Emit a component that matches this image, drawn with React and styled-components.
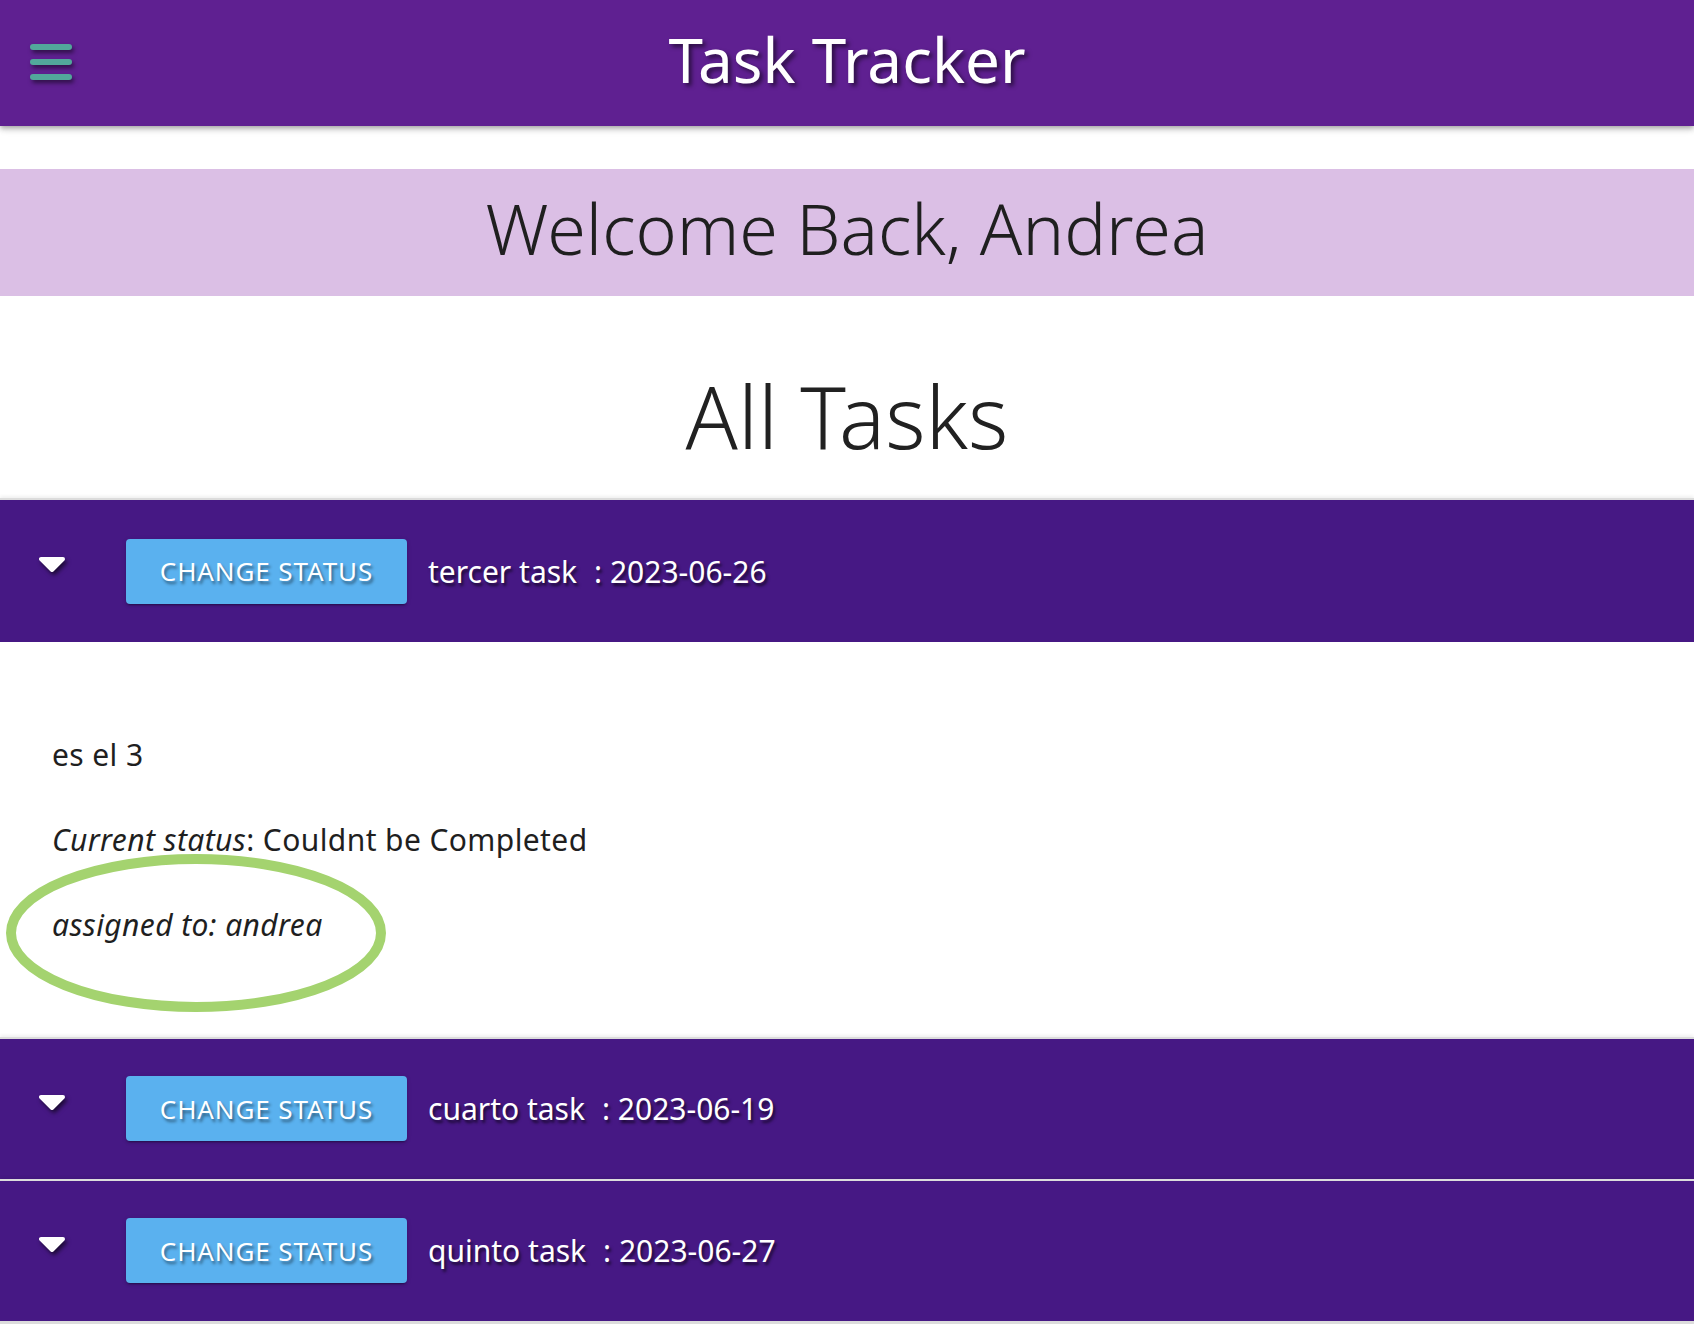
import { useState } from 'react';
import styled, { createGlobalStyle } from 'styled-components';

const initialTasks = [
  {
    id: 3,
    title: 'tercer task',
    date: '2023-06-26',
    description: 'es el 3',
    status: 'Couldnt be Completed',
    assignee: 'andrea',
  },
  {
    id: 4,
    title: 'cuarto task',
    date: '2023-06-19',
    description: 'es el 4',
    status: 'In Progress',
    assignee: 'andrea',
  },
  {
    id: 5,
    title: 'quinto task',
    date: '2023-06-27',
    description: 'es el 5',
    status: 'Pending',
    assignee: 'andrea',
  },
];

function MenuIcon() {
  return (
    <svg width="42" height="42" viewBox="0 0 42 42">
      <g stroke="#52a79b" strokeWidth="6" strokeLinecap="round">
        <line x1="3" y1="5" x2="39" y2="5" />
        <line x1="3" y1="20" x2="39" y2="20" />
        <line x1="3" y1="35" x2="39" y2="35" />
      </g>
    </svg>
  );
}

function ExpandIcon() {
  return (
    <svg width="28" height="16" viewBox="0 0 28 16">
      <polygon
        points="3,3 25,3 14,14"
        fill="#fff"
        stroke="#fff"
        strokeWidth="4"
        strokeLinejoin="round"
      />
    </svg>
  );
}

export default function App() {
  const [openId, setOpenId] = useState(3);

  return (
    <>
      <GlobalStyle />
      <Header>
        <MenuButton aria-label="menu">
          <MenuIcon />
        </MenuButton>
        <Title>Task Tracker</Title>
        <span />
      </Header>
      <Welcome>
        <WelcomeText>Welcome Back, Andrea</WelcomeText>
      </Welcome>
      <Heading>All Tasks</Heading>
      <TaskList>
        {initialTasks.map((task) => {
          const open = openId === task.id;
          return (
            <Item key={task.id}>
              <Summary $open={open}>
                <Toggle onClick={() => setOpenId(open ? null : task.id)}>
                  <ExpandIcon />
                </Toggle>
                <StatusButton>Change Status</StatusButton>
                <RowText>
                  {task.title}
                  <DateLabel>: {task.date}</DateLabel>
                </RowText>
              </Summary>
              {open ? (
                <Details>
                  <Line>{task.description}</Line>
                  <Line>
                    <em>Current status</em>: {task.status}
                  </Line>
                  <Line>
                    <em>assigned to: {task.assignee}</em>
                  </Line>
                  <Highlight width="382" height="160" viewBox="0 0 382 160">
                    <ellipse
                      cx="191"
                      cy="80"
                      rx="185"
                      ry="74"
                      fill="none"
                      stroke="#a4d36f"
                      strokeWidth="10"
                    />
                  </Highlight>
                </Details>
              ) : null}
            </Item>
          );
        })}
      </TaskList>
    </>
  );
}

const GlobalStyle = createGlobalStyle`
  body {
    margin: 0;
    background: #fff;
    font-family: 'Noto Sans', 'DejaVu Sans', sans-serif;
    color: rgba(0, 0, 0, 0.87);
  }
`;

const Header = styled.header`
  position: relative;
  z-index: 1;
  display: grid;
  grid-template-columns: 1fr auto 1fr;
  align-items: center;
  height: 126px;
  background: #5f2091;
  box-shadow: 0 2px 4px -1px rgba(0, 0, 0, 0.2), 0 4px 5px 0 rgba(0, 0, 0, 0.14),
    0 1px 10px 0 rgba(0, 0, 0, 0.12);
`;

const MenuButton = styled.button`
  justify-self: start;
  display: flex;
  margin: 0 0 0 30px;
  padding: 0;
  border: none;
  background: none;
  cursor: pointer;
  filter: drop-shadow(2px 3px 2px rgba(0, 0, 0, 0.5));
`;

const Title = styled.h1`
  margin: 0;
  padding-bottom: 8px;
  font-size: 62px;
  font-weight: 400;
  line-height: 1.362;
  color: #fff;
  text-shadow: 3px 3px 4px rgba(0, 0, 0, 0.55);
`;

const Welcome = styled.div`
  display: flex;
  justify-content: center;
  align-items: center;
  height: 127px;
  margin-top: 43px;
  background: #dbbfe5;
`;

const WelcomeText = styled.h2`
  margin: 0;
  padding-bottom: 8px;
  font-size: 70px;
  font-weight: 300;
  line-height: 1.362;
  color: #1f1f1f;
`;

const Heading = styled.h2`
  margin: 71px 0 34px;
  font-size: 86px;
  font-weight: 300;
  line-height: 97px;
  text-align: center;
  color: #212121;
`;

const TaskList = styled.div`
  border-bottom: 3px solid #dcdcdc;
`;

const Item = styled.section`
  border-top: 2px solid #dcdcdc;
  box-shadow: 0 -2px 3px rgba(0, 0, 0, 0.06);
`;

const Summary = styled.div`
  display: flex;
  align-items: center;
  box-sizing: border-box;
  height: ${(p) => (p.$open ? 142 : 140)}px;
  padding-left: 38px;
  background: #461884;
`;

const Toggle = styled.button`
  display: flex;
  margin: 0 0 14px;
  padding: 0;
  border: none;
  background: none;
  cursor: pointer;
  filter: drop-shadow(2px 3px 2px rgba(0, 0, 0, 0.6));
`;

const StatusButton = styled.button`
  width: 281px;
  height: 65px;
  margin-left: 60px;
  padding: 0;
  border: none;
  border-radius: 4px;
  background: #5ab1ef;
  color: #fff;
  font-family: inherit;
  font-size: 26px;
  font-weight: 400;
  letter-spacing: 0.9px;
  text-transform: uppercase;
  text-shadow: 2px 3px 3px rgba(0, 0, 0, 0.45);
  box-shadow: 0 3px 1px -2px rgba(0, 0, 0, 0.2), 0 2px 2px 0 rgba(0, 0, 0, 0.14),
    0 1px 5px 0 rgba(0, 0, 0, 0.12);
  cursor: pointer;
`;

const RowText = styled.span`
  margin-left: 21px;
  font-size: 30px;
  color: #fff;
  text-shadow: 2px 3px 3px rgba(0, 0, 0, 0.6);
`;

const DateLabel = styled.span`
  margin-left: 17px;
`;

const Details = styled.div`
  position: relative;
  padding: 91px 52px 90px;
`;

const Line = styled.p`
  margin: 0 0 41.5px;
  font-size: 30px;
  line-height: 43.5px;
  letter-spacing: 0.4px;
  color: #1f1f1f;

  &:last-of-type {
    margin-bottom: 0;
  }
`;

const Highlight = styled.svg`
  position: absolute;
  left: 5px;
  top: 211px;
  pointer-events: none;
`;
